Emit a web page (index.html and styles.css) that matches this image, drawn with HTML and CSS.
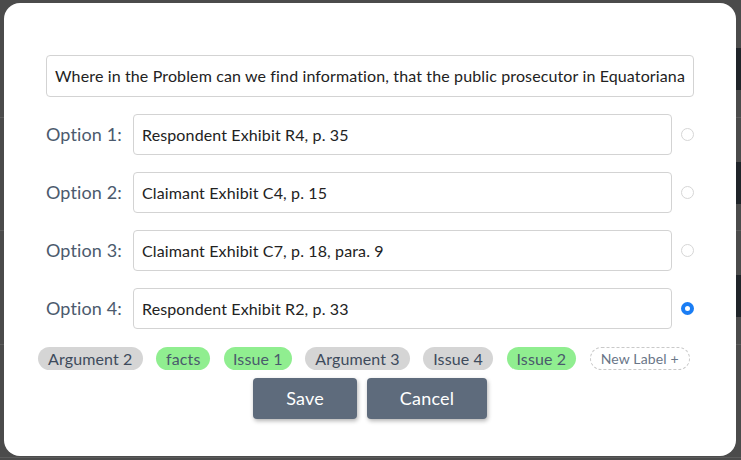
FILE: index.html
```html
<!DOCTYPE html>
<html>
<head>
<meta charset="utf-8">
<link rel="stylesheet" href="styles.css">
</head>
<body>
<div class="backdrop">
  <div class="bg-row"><span class="bg-band"></span></div>
  <div class="bg-row"><span class="bg-band"></span></div>
  <div class="bg-row"><span class="bg-band"></span></div>
  <div class="bg-row"></div>
</div>
<div class="modal">
  <div class="question">Where in the Problem can we find information, that the public prosecutor in Equatoriana</div>
  <div class="options">
    <div class="opt-label">Option 1:</div>
    <div class="field">Respondent Exhibit R4, p. 35</div>
    <span class="radio"></span>
    <div class="opt-label">Option 2:</div>
    <div class="field">Claimant Exhibit C4, p. 15</div>
    <span class="radio"></span>
    <div class="opt-label">Option 3:</div>
    <div class="field">Claimant Exhibit C7, p. 18, para. 9</div>
    <span class="radio"></span>
    <div class="opt-label">Option 4:</div>
    <div class="field">Respondent Exhibit R2, p. 33</div>
    <span class="radio checked"></span>
  </div>
  <div class="labels">
    <span class="pill gray">Argument 2</span>
    <span class="pill green">facts</span>
    <span class="pill green tight">Issue 1</span>
    <span class="pill gray">Argument 3</span>
    <span class="pill gray">Issue 4</span>
    <span class="pill green">Issue 2</span>
    <span class="pill new">New Label +</span>
  </div>
  <div class="actions">
    <button class="btn btn-save">Save</button>
    <button class="btn btn-cancel">Cancel</button>
  </div>
</div>
</body>
</html>
```

FILE: styles.css
```css
* { box-sizing: border-box; }
html, body {
  margin: 0;
  padding: 0;
  width: 741px;
  height: 460px;
  overflow: hidden;
  background: #4b4b4b;
  font-family: Lato, "Noto Sans", sans-serif;
  letter-spacing: 0.13px;
}
.backdrop {
  display: flex;
  flex-direction: column;
  padding-top: 4px;
}
.bg-row {
  height: 113.5px;
  border-bottom: 1px solid #5c5c5c;
  display: flex;
  justify-content: flex-end;
  align-items: flex-start;
}
.bg-band {
  margin-top: 44px;
  width: 40px;
  height: 42px;
  background: #1f2429;
}
.modal {
  position: fixed;
  left: 4px;
  top: 3px;
  width: 732px;
  height: 453px;
  background: #fff;
  border-radius: 16px;
  padding: 52px 42px 0 42px;
  display: flex;
  flex-direction: column;
}
.question {
  height: 42px;
  border: 1px solid #d3d3d3;
  border-radius: 4px;
  padding: 0 8px 1px;
  display: flex;
  align-items: center;
  font-size: 16px;
  color: #222;
  white-space: nowrap;
  overflow: hidden;
}
.options {
  margin-top: 17px;
  display: grid;
  grid-template-columns: 78px 1fr 12px;
  grid-auto-rows: 41px;
  column-gap: 9px;
  row-gap: 17px;
  align-items: center;
}
.opt-label {
  font-size: 18px;
  color: #4b5a6d;
  padding-bottom: 1px;
  white-space: nowrap;
}
.field {
  height: 41px;
  border: 1px solid #d3d3d3;
  border-radius: 4px;
  padding: 0 8px 1px;
  display: flex;
  align-items: center;
  font-size: 16px;
  color: #222;
  margin-right: 1px;
}
.radio {
  width: 13px;
  height: 13px;
  border-radius: 50%;
  border: 1px solid #d6d6d6;
  background: #fff;
  justify-self: end;
}
.radio.checked {
  border: 4px solid #1a7df4;
  background: #fff;
}
.labels {
  margin-top: 18px;
  margin-left: -8px;
  display: flex;
  gap: 13.5px;
}
.pill {
  flex: none;
  white-space: nowrap;
  height: 23px;
  border-radius: 12px;
  padding: 0 10px 1px;
  display: flex;
  align-items: center;
  font-size: 16px;
  color: #3e4b5c;
}
.pill.tight { padding: 0 9px 1px; }
.pill.gray { background: #d5d5d5; }
.pill.green { background: #90ee90; color: #4a5a6c; }
.pill.new {
  border: 1px dashed #c9c9c9;
  color: #6a7688;
  font-size: 14px;
  padding: 0 10px 1px;
}
.actions {
  margin-top: 8px;
  display: flex;
  justify-content: center;
  gap: 10px;
}
.btn {
  height: 41px;
  border: none;
  border-radius: 4px;
  background: #5e6b7c;
  color: #fff;
  font-family: Lato, "Noto Sans", sans-serif;
  font-size: 18px;
  letter-spacing: 0.2px;
  padding-bottom: 2px;
  box-shadow: 1px 2px 4px rgba(0,0,0,0.3);
}
.btn-save { width: 104px; }
.btn-cancel { width: 120px; }
```
